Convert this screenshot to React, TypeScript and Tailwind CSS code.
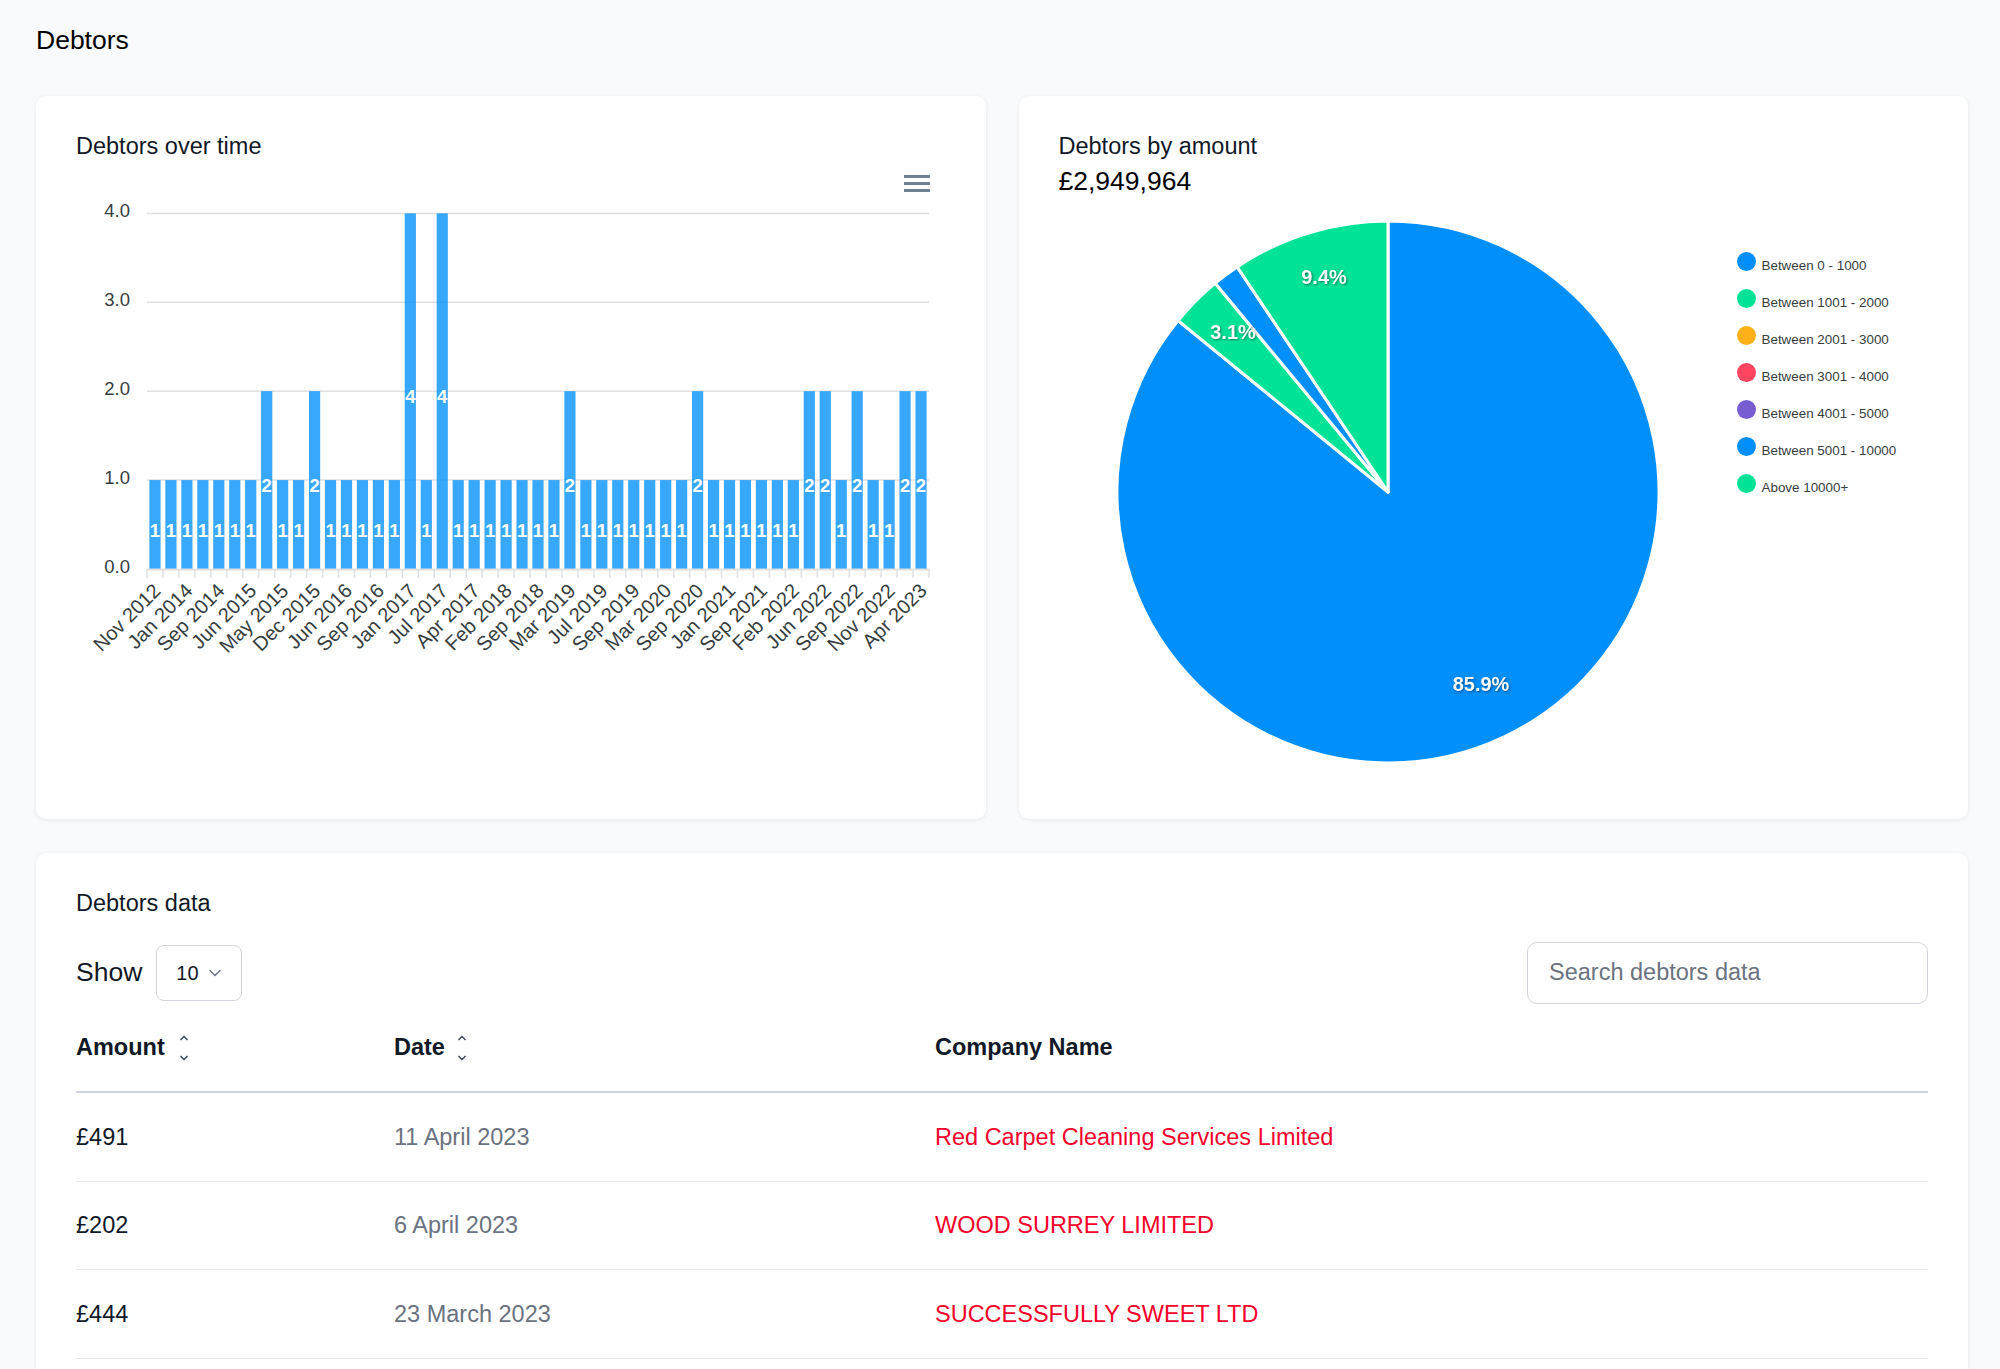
import { ChevronDown } from "lucide-react";

const barValues = [
  1, 1, 1, 1, 1, 1, 1, 2, 1, 1, 2, 1, 1, 1, 1, 1, 4, 1, 4, 1, 1, 1, 1, 1, 1, 1, 2, 1, 1, 1, 1, 1, 1, 1, 2,
  1, 1, 1, 1, 1, 1, 2, 2, 1, 2, 1, 1, 2, 2,
];

const barLabels = [
  "Nov 2012", "Jan 2014", "Sep 2014", "Jun 2015", "May 2015", "Dec 2015", "Jun 2016", "Sep 2016",
  "Jan 2017", "Jul 2017", "Apr 2017", "Feb 2018", "Sep 2018", "Mar 2019", "Jul 2019", "Sep 2019",
  "Mar 2020", "Sep 2020", "Jan 2021", "Sep 2021", "Feb 2022", "Jun 2022", "Sep 2022", "Nov 2022",
  "Apr 2023",
];

const legend = [
  { label: "Between 0 - 1000", color: "bg-[#008FFB]" },
  { label: "Between 1001 - 2000", color: "bg-[#00E396]" },
  { label: "Between 2001 - 3000", color: "bg-[#FEB019]" },
  { label: "Between 3001 - 4000", color: "bg-[#FF4560]" },
  { label: "Between 4001 - 5000", color: "bg-[#775DD0]" },
  { label: "Between 5001 - 10000", color: "bg-[#008FFB]" },
  { label: "Above 10000+", color: "bg-[#00E396]" },
];

const rows = [
  { amount: "£491", date: "11 April 2023", company: "Red Carpet Cleaning Services Limited" },
  { amount: "£202", date: "6 April 2023", company: "WOOD SURREY LIMITED" },
  { amount: "£444", date: "23 March 2023", company: "SUCCESSFULLY SWEET LTD" },
];

// plot area in page coordinates
const X0 = 147;
const X1 = 929;
const Y0 = 568;
const UNIT = 88.9;
const STEP = (X1 - X0) / barValues.length;

function BarChart() {
  return (
    <svg width="869" height="620" viewBox="76 159 869 620" className="block">
      {/* toolbar menu */}
      <g stroke="#6e8192" strokeWidth="3">
        <line x1="904" y1="175.5" x2="930" y2="175.5" />
        <line x1="904" y1="182.5" x2="930" y2="182.5" />
        <line x1="904" y1="189.5" x2="930" y2="189.5" />
      </g>

      {[1, 2, 3, 4].map((v) => (
        <line key={v} x1={X0} x2={X1} y1={Y0 - v * UNIT} y2={Y0 - v * UNIT} stroke="#e0e0e0" strokeWidth="1.5" />
      ))}
      {[0, 1, 2, 3, 4].map((v) => (
        <text key={v} x="130" y={Y0 - v * UNIT + 4} textAnchor="end" fontSize="18.5" fill="#373d3f">
          {v.toFixed(1)}
        </text>
      ))}

      {barValues.map((v, i) => {
        const cx = X0 + (i + 0.5) * STEP;
        const h = v * UNIT;
        return (
          <g key={i}>
            <rect x={cx - 5.6} y={Y0 - h} width="11.2" height={h} fill="#008FFB" fillOpacity="0.78" />
            <text
              x={cx}
              y={Y0 - h / 2 + 12}
              textAnchor="middle"
              fontSize="18.5"
              fontWeight="700"
              fill="#ffffff"
            >
              {v}
            </text>
          </g>
        );
      })}

      <line x1={X0} x2={X1} y1={Y0 + 0.5} y2={Y0 + 0.5} stroke="#e0e0e0" strokeWidth="2" />
      {Array.from({ length: barValues.length + 1 }).map((_, k) => (
        <line
          key={k}
          x1={X0 + k * STEP}
          x2={X0 + k * STEP}
          y1={Y0}
          y2={Y0 + 9}
          stroke="#e0e0e0"
          strokeWidth="1.5"
        />
      ))}
      {barLabels.map((label, j) => {
        const cx = X0 + (j * 2 + 0.5) * STEP + 7;
        return (
          <text
            key={label + j}
            x={cx}
            y={591}
            textAnchor="end"
            fontSize="20"
            fill="#373d3f"
            transform={`rotate(-45 ${cx} 591)`}
          >
            {label}
          </text>
        );
      })}
    </svg>
  );
}

const CX = 1387;
const CY = 492;
const R = 271;

function arc(from: number, to: number) {
  const p = (a: number) => {
    const rad = (a * Math.PI) / 180;
    return `${CX + R * Math.sin(rad)} ${CY - R * Math.cos(rad)}`;
  };
  const large = to - from > 180 ? 1 : 0;
  return `M ${CX} ${CY} L ${p(from)} A ${R} ${R} 0 ${large} 1 ${p(to)} Z`;
}

const slices = [
  { pct: 85.9, color: "#008FFB" },
  { pct: 3.1, color: "#00E396" },
  { pct: 1.6, color: "#008FFB" },
  { pct: 9.4, color: "#00E396" },
];

function PieChart() {
  let start = 0;
  return (
    <svg width="660" height="583" viewBox="1058 196 660 583" className="block shrink-0">
      {slices.map((s, i) => {
        const end = start + s.pct * 3.6;
        const d = arc(start, end);
        start = end;
        return <path key={i} d={d} fill={s.color} stroke="#ffffff" strokeWidth="3" strokeLinejoin="round" />;
      })}
      <g
        fontSize="20"
        fontWeight="700"
        fill="#ffffff"
        textAnchor="middle"
        style={{ filter: "drop-shadow(1px 1px 1px rgba(0,0,0,0.45))" }}
      >
        <text x="1480" y="691">85.9%</text>
        <text x="1323" y="284">9.4%</text>
        <text x="1232" y="339">3.1%</text>
      </g>
    </svg>
  );
}

function SortIcon() {
  return (
    <svg width="10" height="28" viewBox="0 0 10 28" className="shrink-0">
      <polyline points="1.5,6 5,2.5 8.5,6" fill="none" stroke="#374151" strokeWidth="1.4" />
      <polyline points="1.5,22 5,25.5 8.5,22" fill="none" stroke="#374151" strokeWidth="1.4" />
    </svg>
  );
}

export default function App() {
  return (
    <div className="min-h-screen bg-[#f9fafb] pl-[36px] pr-[32px] pt-[24px] font-['Liberation_Sans',Arial,sans-serif]">
      <h1 className="text-[26.5px] leading-[32px] text-black">Debtors</h1>

      <div className="mt-[40px] grid grid-cols-2 gap-[33px]">
        {/* Debtors over time */}
        <div className="rounded-[10px] bg-white px-10 pt-[36px] pb-[39px] shadow-[0_1px_4px_rgba(0,0,0,0.08)]">
          <h2 className="text-[23.5px] leading-[28px] text-[#111827]">Debtors over time</h2>
          <BarChart />
        </div>

        {/* Debtors by amount */}
        <div className="rounded-[10px] bg-white px-10 pt-[36px] pb-[39px] shadow-[0_1px_4px_rgba(0,0,0,0.08)]">
          <h2 className="text-[23.5px] leading-[28px] text-[#111827]">Debtors by amount</h2>
          <div className="mt-[5px] text-[26.5px] leading-[32px] text-black">£2,949,964</div>
          <div className="-mt-px flex">
            <PieChart />
            <div className="ml-[18px] mt-[56px] flex flex-col">
              {legend.map((item) => (
                <div key={item.label} className="flex h-[37px] items-start">
                  <span className={`h-[19px] w-[19px] shrink-0 rounded-full ${item.color}`} />
                  <span className="ml-[6px] mt-[5px] whitespace-nowrap text-[13.4px] leading-[17px] text-[#373d3f]">
                    {item.label}
                  </span>
                </div>
              ))}
            </div>
          </div>
        </div>
      </div>

      {/* Debtors data */}
      <div className="mt-[34px] rounded-[10px] bg-white px-10 pt-[36px] pb-10 shadow-[0_1px_4px_rgba(0,0,0,0.08)]">
        <h2 className="text-[23.5px] leading-[28px] text-[#111827]">Debtors data</h2>

        <div className="mt-[24px] flex h-[63px] items-center justify-between">
          <div className="flex items-center">
            <span className="text-[26.5px] text-[#111827]">Show</span>
            <div className="ml-[14px] flex h-[56px] w-[86px] items-center rounded-[8px] border border-[#d1d5db] pl-[19px]">
              <span className="text-[20px] text-[#111827]">10</span>
              <ChevronDown size={20} strokeWidth={1.6} className="ml-[6px] text-[#6b7280]" />
            </div>
          </div>
          <div className="flex h-[62px] w-[401px] items-center rounded-[10px] border border-[#d1d5db] px-[21px] text-[23.5px] text-[#6b7280]">
            Search debtors data
          </div>
        </div>

        <div className="grid grid-cols-[318px_541px_1fr] border-b-2 border-[#d1d5db]">
          <div className="flex h-[87px] items-center gap-[14px] text-[23.5px] font-bold text-[#111827]">
            Amount
            <SortIcon />
          </div>
          <div className="flex h-[87px] items-center gap-[12px] text-[23.5px] font-bold text-[#111827]">
            Date
            <SortIcon />
          </div>
          <div className="flex h-[87px] items-center text-[23.5px] font-bold text-[#111827]">Company Name</div>
        </div>

        {rows.map((row) => (
          <div
            key={row.company}
            className="grid grid-cols-[318px_541px_1fr] border-b border-[#e5e7eb] py-[29.75px] text-[23.5px] leading-[28px]"
          >
            <div className="text-[#111827]">{row.amount}</div>
            <div className="text-[#6b7280]">{row.date}</div>
            <div className="text-[#f5002b]">{row.company}</div>
          </div>
        ))}
      </div>
    </div>
  );
}
